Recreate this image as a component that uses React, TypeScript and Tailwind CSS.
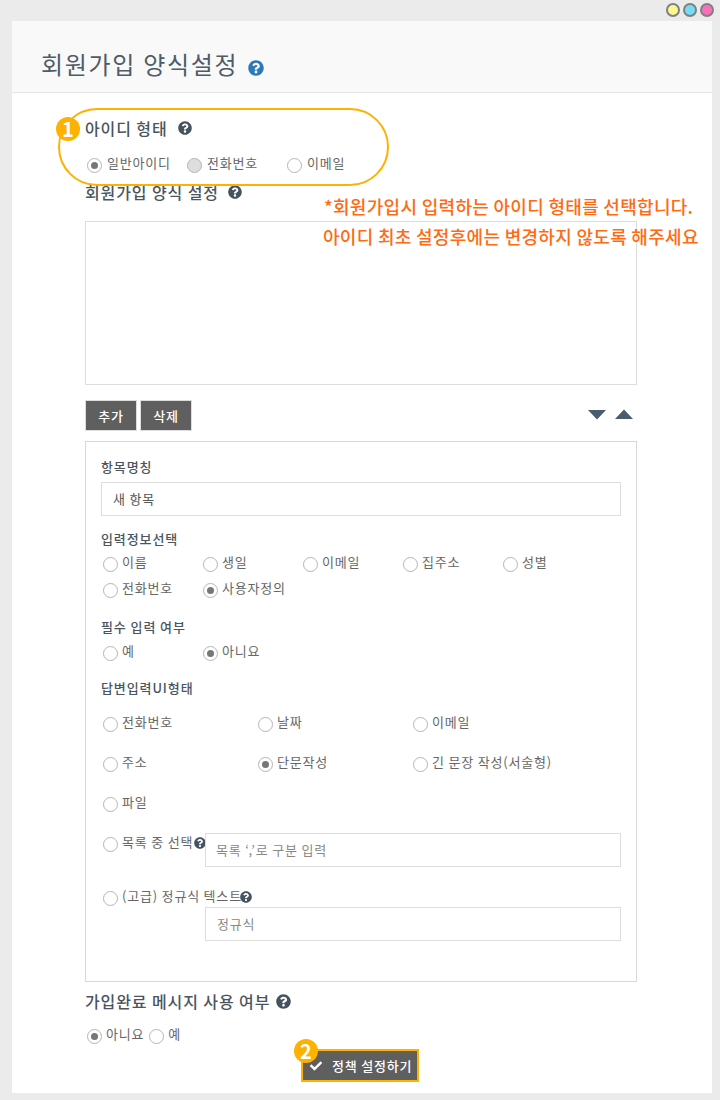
import { FaQuestionCircle, FaCheck } from "react-icons/fa";

const FONT = "[font-family:'Noto_Sans_CJK_KR','Noto_Sans',sans-serif]";

function Radio({ label, checked, disabled, className = "", wide }: { label: string; checked?: boolean; disabled?: boolean; className?: string; wide?: boolean }) {
  return (
    <div className={`flex items-center text-[13px] leading-[20px] tracking-[0.8px] text-[#666] ${className}`}>
      <span className={`mt-[2px] flex h-[15px] w-[15px] shrink-0 items-center justify-center rounded-full border border-[#b5b5b5] ${wide ? "mr-[5px]" : "mr-[4px]"} ${disabled ? "bg-[#dedede]" : "bg-white"}`}>
        {checked && <span className="h-[7px] w-[7px] rounded-full bg-[#777]" />}
      </span>
      <span className="mb-[2px]">{label}</span>
    </div>
  );
}

function SectionLabel({ children, className = "" }: { children: React.ReactNode; className?: string }) {
  return <div className={`text-[13px] font-medium leading-[20px] tracking-[0.9px] text-[#4a5560] ${className}`}>{children}</div>;
}

export default function App() {
  return (
    <div className={`${FONT} relative h-[1100px] w-[720px] overflow-hidden bg-[#ebebeb]`}>
      <div className="flex h-[21px] items-center justify-end gap-[3px] pr-[6px] pt-[0px]">
        <span className="mt-[-2px] h-[14px] w-[14px] rounded-full border-2 border-[#808080] bg-[#fbf88f]" />
        <span className="mt-[-2px] h-[14px] w-[14px] rounded-full border-2 border-[#808080] bg-[#76dcf5]" />
        <span className="mt-[-2px] h-[14px] w-[14px] rounded-full border-2 border-[#808080] bg-[#fb6fb8]" />
      </div>

      <div className="mx-[12px] h-[1072px] w-[700px] bg-white">
        <div className="flex h-[72px] items-start border-b border-[#e5e5e5] bg-[#f9f9f9] pl-[29px] pt-[25px]">
          <span className="text-[24px] leading-[36px] tracking-[1.7px] text-[#4f5b66]">회원가입 양식설정</span>
          <FaQuestionCircle className="ml-[10px] mt-[14px] text-[16px] text-[#2f78b8]" />
        </div>

        <div className="ml-[73px] w-[552px]">
          <div className="mt-[25px] flex h-[20px] items-center text-[16px] font-medium tracking-[0.9px] text-[#4a5560]">
            아이디 형태
            <FaQuestionCircle className="ml-[10px] text-[14px] text-[#45525f]" />
          </div>
          <div className="mt-[16px] flex h-[20px] pl-[2px]">
            <Radio wide label="일반아이디" checked className="w-[100px]" />
            <Radio wide label="전화번호" disabled className="w-[100px]" />
            <Radio wide label="이메일" />
          </div>
          <div className="mt-[8px] flex h-[20px] items-center text-[16px] font-medium tracking-[0.9px] text-[#4a5560]">
            회원가입 양식 설정
            <FaQuestionCircle className="ml-[9px] text-[14px] text-[#45525f]" />
          </div>

          <div className="mt-[19px] h-[164px] border border-[#dddddd] bg-white" />

          <div className="mt-[15px] flex h-[31px] items-center">
            <button className="h-[31px] w-[52px] border border-[#dddddd] bg-[#5f5f5f] text-[13px] font-medium tracking-[0.8px] text-white">추가</button>
            <button className="ml-[3px] h-[31px] w-[52px] border border-[#dddddd] bg-[#5f5f5f] text-[13px] font-medium tracking-[0.8px] text-white">삭제</button>
            <div className="ml-auto mr-[4px] flex items-center gap-[9px] pb-[2px]">
              <svg width="18" height="11" viewBox="0 0 18 11"><path d="M0 1h18L9 10.5z" fill="#4a5c6e" /></svg>
              <svg width="18" height="11" viewBox="0 0 18 11"><path d="M0 10h18L9 0.5z" fill="#4a5c6e" /></svg>
            </div>
          </div>

          <div className="mt-[10px] h-[541px] border border-[#d8d8d8] px-[15px] pt-[15px]">
            <SectionLabel>항목명칭</SectionLabel>
            <div className="mt-[5px] flex h-[34px] items-center border border-[#dddddd] pl-[11px] text-[13px] tracking-[0.8px] text-[#555]">새 항목</div>

            <SectionLabel className="mt-[13px]">입력정보선택</SectionLabel>
            <div className="mt-[1px] grid h-[52px] grid-cols-[100px_100px_100px_100px_100px] grid-rows-[26px_26px] pl-[2px]">
              <Radio label="이름" />
              <Radio label="생일" />
              <Radio label="이메일" />
              <Radio label="집주소" />
              <Radio label="성별" />
              <Radio label="전화번호" />
              <Radio label="사용자정의" checked />
            </div>

            <SectionLabel className="mt-[15px]">필수 입력 여부</SectionLabel>
            <div className="mt-[2px] flex h-[26px] pl-[2px]">
              <Radio label="예" className="w-[100px]" />
              <Radio label="아니요" checked />
            </div>

            <SectionLabel className="mt-[13px]">답변입력UI형태</SectionLabel>
            <div className="mt-[5px] grid grid-cols-[155px_155px_155px] grid-rows-[40px_40px_40px] pl-[2px] pt-[10px]">
              <Radio label="전화번호" className="h-[20px]" />
              <Radio label="날짜" className="h-[20px]" />
              <Radio label="이메일" className="h-[20px]" />
              <Radio label="주소" className="h-[20px]" />
              <Radio label="단문작성" checked className="h-[20px]" />
              <Radio label="긴 문장 작성(서술형)" className="h-[20px]" />
              <Radio label="파일" className="h-[20px]" />
            </div>

            <div className="flex h-[34px] items-start pl-[2px]">
              <div className="flex h-[20px] w-[102px] items-center whitespace-nowrap">
                <Radio label="목록 중 선택" />
                <FaQuestionCircle className="ml-[1px] shrink-0 text-[12px] text-[#45525f]" />
              </div>
              <div className="flex h-[34px] flex-1 items-center border border-[#dddddd] pl-[10px] text-[13px] tracking-[0.8px] text-[#888]">목록 ‘,’로 구분 입력</div>
            </div>

            <div className="mt-[20px] flex h-[20px] items-center pl-[2px]">
              <Radio label="(고급) 정규식 텍스트" />
              <FaQuestionCircle className="ml-[-2px] shrink-0 text-[12px] text-[#45525f]" />
            </div>
            <div className="ml-[104px] flex h-[34px] items-center border border-[#dddddd] pl-[11px] text-[13px] tracking-[0.8px] text-[#888]">정규식</div>
          </div>

          <div className="mt-[9px] flex h-[20px] items-center text-[16px] font-medium tracking-[0.9px] text-[#4a5560]">
            가입완료 메시지 사용 여부
            <FaQuestionCircle className="ml-[6px] text-[15px] text-[#45525f]" />
          </div>
          <div className="mt-[14px] flex h-[20px] pl-[2px]">
            <Radio label="아니요" checked />
            <Radio label="예" className="ml-[5px]" />
          </div>
          <div className="mt-[4px] flex justify-center">
            <button className="ml-[-2px] flex h-[33px] w-[118px] items-center justify-start gap-[10px] border-2 border-[#fdb100] bg-[#5f5f5f] pl-[7px] text-[13px] font-medium tracking-[0.8px] text-white">
              <FaCheck className="text-[12px]" />
              정책 설정하기
            </button>
          </div>
        </div>
      </div>

      <div className="absolute left-[58px] top-[108px] h-[78px] w-[331px] rounded-[39px] border-2 border-[#fdb100]" />
      <div className="absolute left-[56px] top-[117px] flex h-[24px] w-[24px] items-center justify-center rounded-full bg-[#fdb100] text-[20px] font-bold text-white">1</div>
      <div className="absolute left-[294px] top-[1039px] flex h-[24px] w-[24px] items-center justify-center rounded-full bg-[#fdb100] text-[20px] font-bold text-white">2</div>
      <div className="absolute left-[323px] top-[191px] w-[385px] whitespace-nowrap text-[18px] font-medium leading-[30px] tracking-[0.3px] text-[#ff6a13]">
        <div className="pl-[1px]">*회원가입시 입력하는 아이디 형태를 선택합니다.</div>
        <div>아이디 최초 설정후에는 변경하지 않도록 해주세요</div>
      </div>
    </div>
  );
}
